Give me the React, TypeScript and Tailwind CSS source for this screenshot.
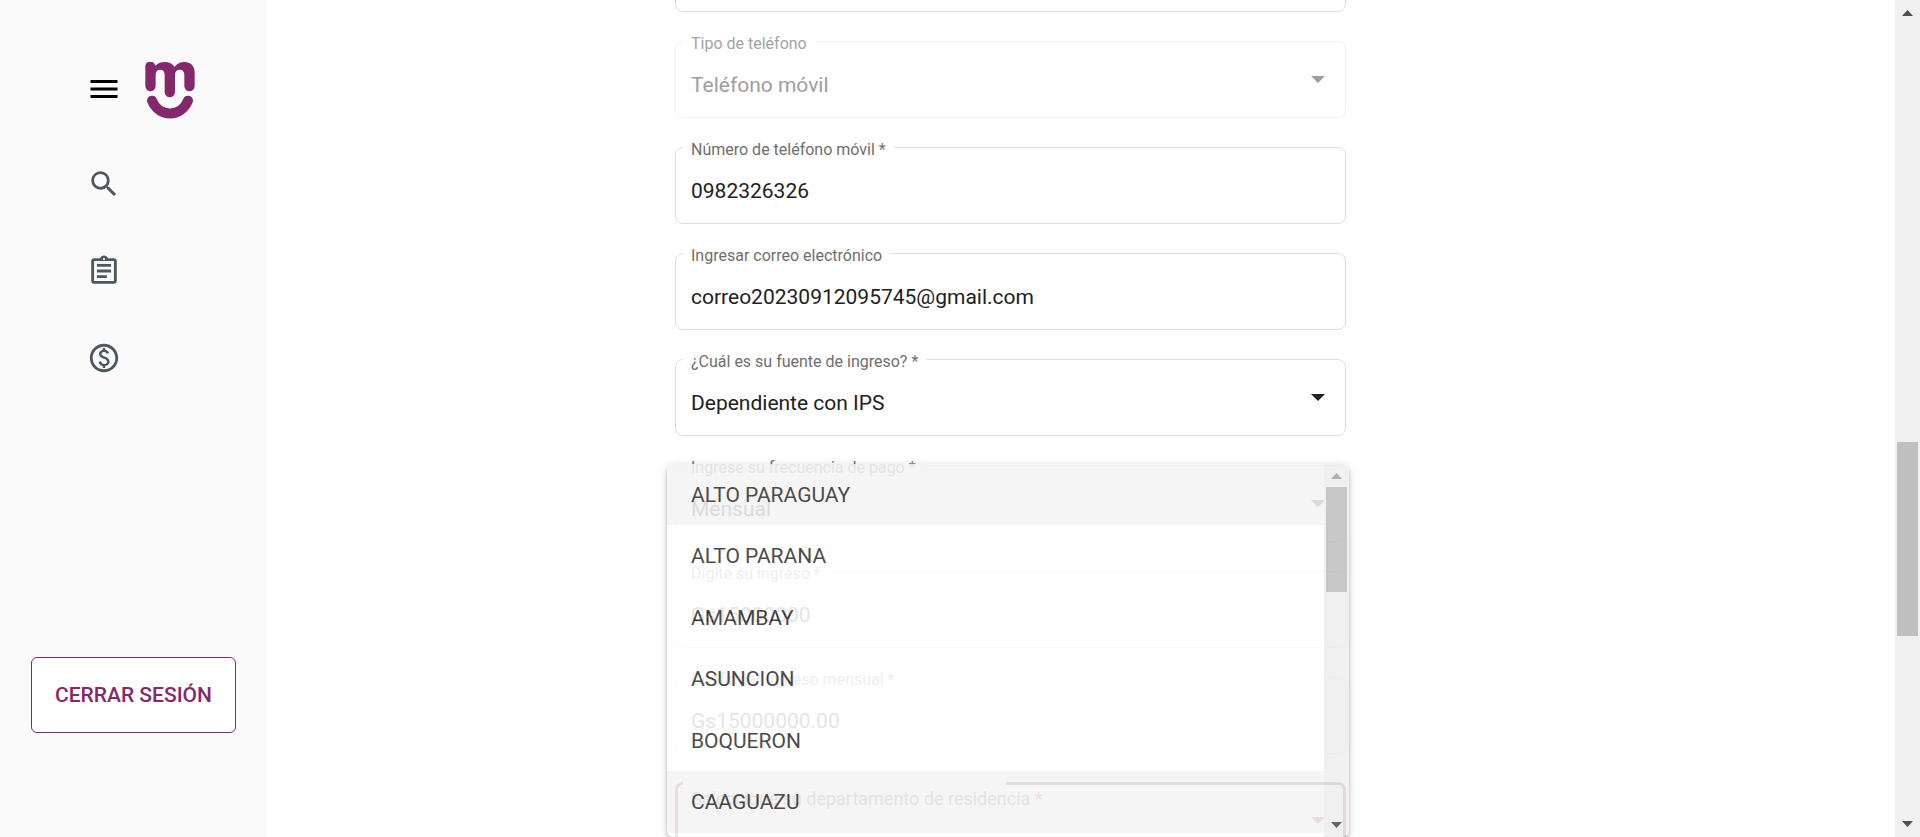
import type { ReactNode } from "react";
import { MdMenu, MdOutlineAssignment, MdOutlinePaid, MdSearch } from "react-icons/md";

const departments = ["ALTO PARAGUAY", "ALTO PARANA", "AMAMBAY", "ASUNCION", "BOQUERON", "CAAGUAZU", "CAAZAPA"];
const highlighted = ["ALTO PARAGUAY", "CAAGUAZU"];

function Logo() {
  return (
    <svg viewBox="435 96 150 171" className="h-[57px] w-[50px]" role="img" aria-label="Inicio">
      <path
        fill="#85276b"
        d="M436 112a15 15 0 0 1 30-5c8-8 18-11 29-11 12 0 22 5 29 15 7-10 17-15 29-15 19 0 31 12 31 31v41a15.500 15.500 0 0 1-31 0v-33c0-11-5-16-14-16s-14 5-14 16v51a15.500 15.500 0 0 1-31 0v-51c0-11-5-16-13-16-9 0-14 5-14 16v33a15.500 15.500 0 0 1-31 0z"
      />
      <path fill="none" stroke="#85276b" strokeWidth="30" strokeLinecap="round" d="M456 212C477 263 543 263 564 212" />
    </svg>
  );
}

function Caret({ className }: { className: string }) {
  return (
    <svg viewBox="0 0 14 7" className={`pointer-events-none mb-3 h-[7px] w-[14px] shrink-0 ${className}`} aria-hidden="true">
      <path d="M0 0h14L7 7z" fill="currentColor" />
    </svg>
  );
}

function Outline({ id, label, disabled, children }: { id: string; label: string; disabled?: boolean; children: ReactNode }) {
  return (
    <fieldset className={`h-[89px] min-w-0 rounded-lg border pl-[7px] pr-5 ${disabled ? "border-[#f0f0f0]" : "border-[#dedede]"}`}>
      <legend className={`px-2 pt-1 text-base leading-[21px] ${disabled ? "text-[#a3a3a3]" : "text-[#6e6e6e]"}`}>
        <label htmlFor={id} className="block">{label}</label>
      </legend>
      <div className="flex h-[63px] items-center pl-2">{children}</div>
    </fieldset>
  );
}

function TextField({ id, label, value }: { id: string; label: string; value: string }) {
  return (
    <Outline id={id} label={label}>
      <input id={id} defaultValue={value} className="h-full w-full min-w-0 bg-transparent pb-[2px] text-[21px] text-[#212121] outline-none" />
    </Outline>
  );
}

function SelectField({ id, label, value, disabled }: { id: string; label: string; value: string; disabled?: boolean }) {
  return (
    <Outline id={id} label={label} disabled={disabled}>
      <select
        id={id}
        disabled={disabled}
        className="h-full min-w-0 flex-1 appearance-none bg-transparent text-[21px] text-[#212121] outline-none disabled:text-[#9e9e9e] disabled:opacity-100"
      >
        <option>{value}</option>
      </select>
      <Caret className={disabled ? "text-[#9e9e9e]" : "text-[#212121]"} />
    </Outline>
  );
}

function ArrowUp({ className }: { className: string }) {
  return (
    <svg viewBox="0 0 11 6" className={`h-[6px] w-[11px] ${className}`} aria-hidden="true">
      <path d="M5.500 0L11 6H0z" fill="currentColor" />
    </svg>
  );
}

function ArrowDown({ className }: { className: string }) {
  return (
    <svg viewBox="0 0 11 6" className={`h-[6px] w-[11px] ${className}`} aria-hidden="true">
      <path d="M0 0h11L5.500 6z" fill="currentColor" />
    </svg>
  );
}

function DepartmentList() {
  return (
    <div className="absolute -left-2 -right-[3px] -top-[307px] flex h-[373px] overflow-hidden rounded-md bg-white opacity-[0.88] shadow-[0_2px_4px_-1px_rgba(0,0,0,0.2),0_4px_5px_0_rgba(0,0,0,0.14),0_1px_10px_0_rgba(0,0,0,0.12)]">
      <div role="listbox" aria-label="Departamentos" className="grid h-[430px] flex-1 grid-rows-7">
        {departments.map((name) => (
          <div
            key={name}
            role="option"
            aria-selected={name === "CAAGUAZU"}
            className={`flex items-center px-6 pt-[2px] text-[21px] text-[#333333] ${highlighted.includes(name) ? "bg-[#f4f4f4]" : ""}`}
          >
            {name}
          </div>
        ))}
      </div>
      <div className="flex w-[25px] flex-col items-center bg-[#efefef] pb-[9px] pt-[9px]">
        <ArrowUp className="text-[#a3a3a3]" />
        <div className="mt-2 h-[105px] w-[21px] bg-[#c0c0c0]" />
        <ArrowDown className="mt-auto text-[#505050]" />
      </div>
    </div>
  );
}

function DepartmentField() {
  return (
    <div className="relative">
      <fieldset className="h-[90px] min-w-0 rounded-lg border-3 border-[#85276b] pl-[5px] pr-[18px]">
        <legend className="h-[25px] w-[323px]" />
        <div className="flex h-[61px] items-center pl-2">
          <select id="departamento" className="h-full min-w-0 flex-1 appearance-none bg-transparent text-[21px] outline-none">
            <option value=""></option>
          </select>
          <Caret className="text-[#85276b]" />
        </div>
      </fieldset>
      <label htmlFor="departamento" className="absolute left-4 top-4 whitespace-nowrap text-lg leading-6 text-[#666666]">
        Seleccione su departamento de residencia <span className="text-[#f44336]">*</span>
      </label>
      <DepartmentList />
    </div>
  );
}

export default function App() {
  return (
    <div className="flex h-screen overflow-hidden bg-white font-[Roboto,sans-serif]">
      <aside className="flex w-[267px] shrink-0 flex-col bg-[#fafafa] pb-[104px] pt-[62px]">
        <div className="flex items-center gap-[23px] pl-[86px]">
          <button type="button" aria-label="Menú" className="mb-1 text-black">
            <MdMenu className="size-9" />
          </button>
          <Logo />
        </div>
        <nav className="mt-12 flex flex-col items-start gap-[53px] pl-[87px] text-[#50575a]">
          <a href="#buscar" aria-label="Buscar"><MdSearch className="size-[34px]" /></a>
          <a href="#solicitudes" aria-label="Solicitudes"><MdOutlineAssignment className="size-[34px]" /></a>
          <a href="#pagos" aria-label="Pagos"><MdOutlinePaid className="size-[34px]" /></a>
        </nav>
        <button
          type="button"
          className="ml-[31px] mr-[31px] mt-auto h-[76px] whitespace-nowrap rounded-md border border-[#85276b] bg-white pt-[2px] text-[21px] font-medium text-[#85276b]"
        >
          CERRAR SESIÓN
        </button>
      </aside>

      <main className="flex min-w-0 flex-1 justify-center overflow-hidden pr-[141px]">
        <form className="-mt-[77px] flex h-fit w-full max-w-[671px] flex-col gap-[17px]">
          <TextField id="direccion" label="Dirección" value="" />
          <SelectField id="tipo" label="Tipo de teléfono" value="Teléfono móvil" disabled />
          <TextField id="numero" label="Número de teléfono móvil *" value="0982326326" />
          <TextField id="correo" label="Ingresar correo electrónico" value="correo20230912095745@gmail.com" />
          <SelectField id="fuente" label="¿Cuál es su fuente de ingreso? *" value="Dependiente con IPS" />
          <SelectField id="frecuencia" label="Ingrese su frecuencia de pago *" value="Mensual" />
          <TextField id="ingreso" label="Digite su ingreso *" value="Gs15000000" />
          <TextField id="mensual" label="Confirmar ingreso mensual *" value="Gs15000000.00" />
          <DepartmentField />
        </form>
      </main>

      <div className="flex w-[25px] shrink-0 flex-col items-center bg-[#f0f0f0] py-[10px]">
        <ArrowUp className="text-[#505050]" />
        <div className="mt-[426px] h-[194px] w-[21px] bg-[#c0c0c0]" />
        <ArrowDown className="mt-auto text-[#505050]" />
      </div>
    </div>
  );
}
